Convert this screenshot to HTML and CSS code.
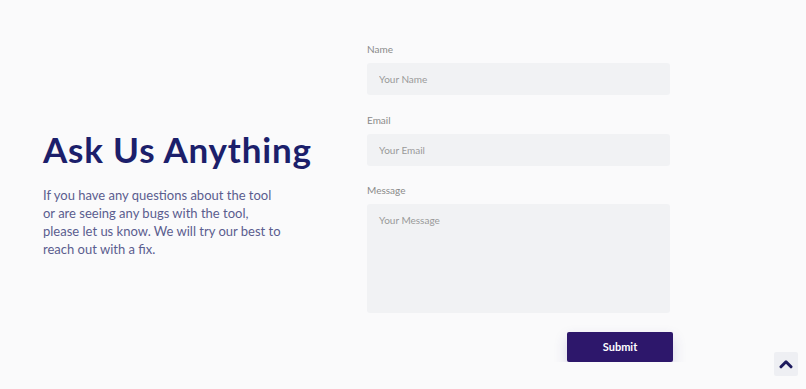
FILE: index.html
```html
<!DOCTYPE html>
<html>
<head>
<meta charset="utf-8">
<link rel="stylesheet" href="styles.css">
</head>
<body>
<main class="page">
  <section class="intro">
    <h1 class="title">Ask Us Anything</h1>
    <p class="lead">If you have any questions about the tool<br>or are seeing any bugs with the tool,<br>please let us know. We will try our best to<br>reach out with a fix.</p>
  </section>
  <form class="form">
    <label class="field">
      <span class="label">Name</span>
      <input class="input" type="text" placeholder="Your Name">
    </label>
    <label class="field">
      <span class="label">Email</span>
      <input class="input" type="email" placeholder="Your Email">
    </label>
    <label class="field">
      <span class="label">Message</span>
      <textarea class="input area" placeholder="Your Message"></textarea>
    </label>
    <div class="actions">
      <button class="submit" type="button">Submit</button>
    </div>
  </form>
</main>
<button class="totop" type="button" aria-label="Back to top">
  <svg width="14" height="10" viewBox="0 0 14 10"><path d="M2 7.8 L7 2.8 L12 7.8" fill="none" stroke="#1e1b5e" stroke-width="3" stroke-linecap="round" stroke-linejoin="round"/></svg>
</button>
</body>
</html>
```
FILE: styles.css
```css
html, body {
  margin: 0;
  padding: 0;
  background: #fafafb;
  font-family: Lato, "Noto Sans", sans-serif;
}
.page {
  display: flex;
  align-items: center;
  padding: 42px 0 0 43px;
}
.intro {
  width: 324px;
  padding-bottom: 17px;
}
.title {
  margin: 0;
  font-size: 35px;
  font-weight: 700;
  color: #1c1f6b;
  letter-spacing: 0.8px;
  line-height: 40px;
}
.lead {
  margin: 17px 0 0;
  font-size: 13px;
  line-height: 18px;
  color: #5a5d8f;
}
.form {
  width: 306px;
  display: flex;
  flex-direction: column;
}
.field {
  display: flex;
  flex-direction: column;
  margin-bottom: 17.5px;
}
.label {
  font-size: 10px;
  color: #8a8a8a;
  line-height: 14px;
  margin-bottom: 7px;
}
.input {
  box-sizing: border-box;
  width: 303px;
  height: 32px;
  border: none;
  border-radius: 3px;
  background: #f1f2f4;
  padding: 0 12px;
  font-family: inherit;
  font-size: 10px;
  color: #444;
  outline: none;
}
.input::placeholder { color: #9a9a9a; }
.area {
  height: 109px;
  padding-top: 10px;
  resize: none;
}
.actions {
  display: flex;
  justify-content: flex-end;
  margin-top: 1px;
}
.submit {
  width: 106px;
  height: 30px;
  border: none;
  border-radius: 2px;
  background: #2d176b;
  color: #fff;
  font-family: inherit;
  font-size: 11px;
  font-weight: 700;
  box-shadow: 0 6px 14px rgba(60, 50, 140, 0.18);
}
.totop {
  position: fixed;
  right: 8px;
  bottom: 13px;
  width: 24px;
  height: 24px;
  border: none;
  border-radius: 2px;
  background: #eeeff3;
  display: flex;
  align-items: center;
  justify-content: center;
  padding: 0;
}
```
